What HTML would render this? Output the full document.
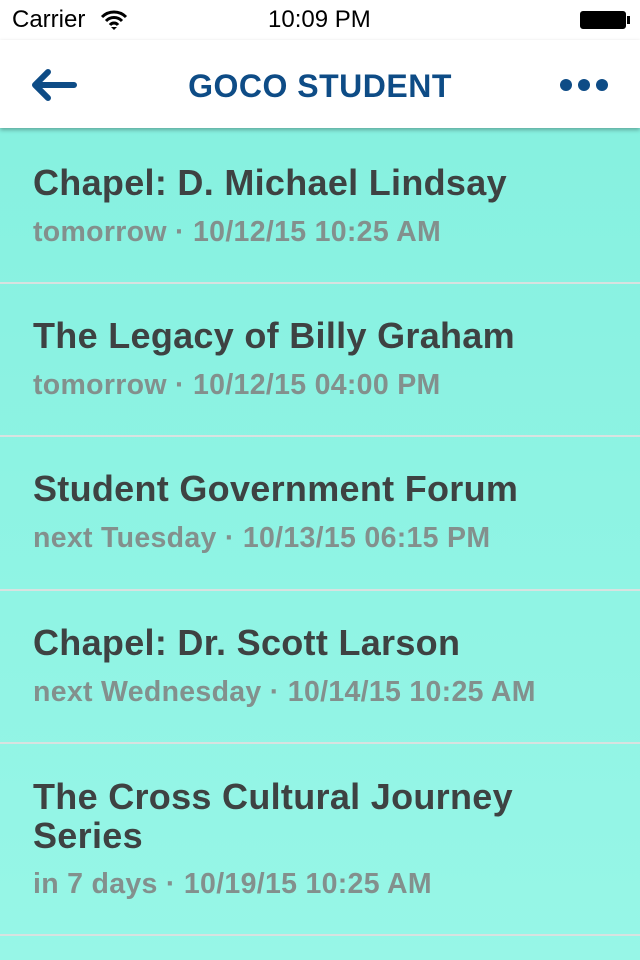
<!DOCTYPE html>
<html><head><meta charset="utf-8"><style>
*{margin:0;padding:0;box-sizing:border-box}
body{width:640px;height:960px;overflow:hidden;font-family:"Liberation Sans",sans-serif;background:linear-gradient(#84f0df,#97f6e7);position:relative}
.status{position:absolute;top:0;left:0;width:640px;height:40px;background:#fff;font-size:24px;color:#000}
.nav{position:absolute;top:40px;left:0;width:640px;height:88px;background:#fff;box-shadow:0 2px 4px rgba(0,0,0,.3);z-index:2}
.nav .t{position:absolute;left:0;right:0;top:28px;text-align:center;font-weight:bold;font-size:32px;color:#0e4c86;letter-spacing:.5px}
.item{position:absolute;left:0;width:640px;border-bottom:2px solid #d8e2e0}
.item h2{position:absolute;left:33px;font-size:36px;font-weight:bold;color:#3e4242;line-height:39px;letter-spacing:.3px;white-space:nowrap}
.item p{position:absolute;left:33px;font-size:28.5px;font-weight:bold;color:#83908d;letter-spacing:.3px;white-space:nowrap}
</style></head><body>
<div class="status">
<span style="position:absolute;left:12px;top:6px">Carrier</span>
<svg style="position:absolute;left:100px;top:10px" width="28" height="20" viewBox="0 0 28 20"><path d="M2 7a17 17 0 0 1 24 0M6 11a11 11 0 0 1 16 0M10 15a5 5 0 0 1 8 0" stroke="#000" stroke-width="3" fill="none"/><path d="M14 20l-3-3h6z"/></svg>
<span style="position:absolute;left:268px;top:6px">10:09 PM</span>
<div style="position:absolute;left:580px;top:11px;width:46px;height:18px;border:2px solid #000;border-radius:3px;background:#000"></div>
<div style="position:absolute;left:627px;top:16px;width:3px;height:8px;background:#000"></div>
</div>
<div class="nav">
<svg style="position:absolute;left:30px;top:27px" width="48" height="36" viewBox="0 0 48 36"><path d="M44 18H6M18 5L5 18l13 13" stroke="#0e4c86" stroke-width="6" stroke-linecap="round" stroke-linejoin="round" fill="none"/></svg>
<div class="t">GOCO STUDENT</div>
<svg style="position:absolute;left:558px;top:38px" width="52" height="14"><circle cx="8" cy="7" r="6" fill="#0e4c86"/><circle cx="26" cy="7" r="6" fill="#0e4c86"/><circle cx="44" cy="7" r="6" fill="#0e4c86"/></svg>
</div>
<div class="item" style="top:128px;height:156px"><h2 style="top:35px">Chapel: D. Michael Lindsay</h2><p style="top:88px">tomorrow · 10/12/15 10:25 AM</p></div>
<div class="item" style="top:284px;height:153px"><h2 style="top:32px">The Legacy of Billy Graham</h2><p style="top:85px">tomorrow · 10/12/15 04:00 PM</p></div>
<div class="item" style="top:437px;height:154px"><h2 style="top:32px">Student Government Forum</h2><p style="top:85px">next Tuesday · 10/13/15 06:15 PM</p></div>
<div class="item" style="top:591px;height:153px"><h2 style="top:32px">Chapel: Dr. Scott Larson</h2><p style="top:85px">next Wednesday · 10/14/15 10:25 AM</p></div>
<div class="item" style="top:744px;height:192px"><h2 style="top:33px">The Cross Cultural Journey<br>Series</h2><p style="top:124px">in 7 days · 10/19/15 10:25 AM</p></div>
</body></html>
